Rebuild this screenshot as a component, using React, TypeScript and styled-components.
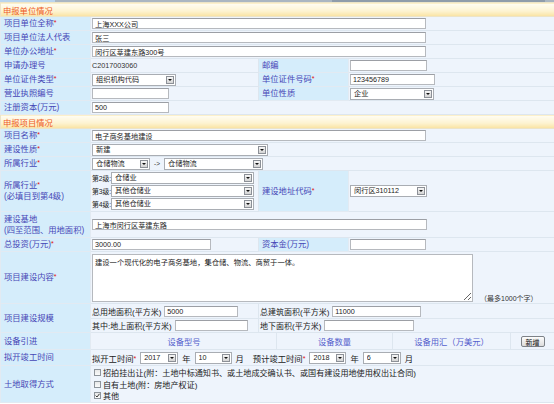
import React from 'react';
import styled, { createGlobalStyle } from 'styled-components';

const GlobalStyle = createGlobalStyle`
  html, body {
    margin: 0;
    padding: 0;
    background: #fff;
  }
  body {
    width: 554px;
    overflow: hidden;
    font-family: "Liberation Sans", "Noto Sans CJK SC", sans-serif;
  }
`;

const TopStrip = styled.div`
  height: 2px;
  background: linear-gradient(to right, #b9d4ee 0 55px, #aab6c2 55px 332px, #8f9cab 332px 545px, #aab6c2 545px);
`;

const FormTable = styled.table`
  width: 554px;
  table-layout: fixed;
  border-collapse: collapse;
`;

const SectionCell = styled.th`
  height: 13px;
  padding: 0 2px;
  text-align: left;
  font-weight: normal;
  font-size: 8.3px;
  color: #ee5a25;
  background: linear-gradient(#fffdf4, #fdf3d0 60%, #f9e2a0);
  border: 1px solid #ece4c8;
`;

const Label = styled.td<{ $h?: number }>`
  height: ${(p) => p.$h ?? 13}px;
  padding: 0 3px;
  background: #d5edfb;
  color: #4646b6;
  font-size: 8.3px;
  line-height: 1.3;
  border: 1px solid #e2eaf2;
  white-space: nowrap;
  overflow: hidden;
`;

const Value = styled.td<{ $h?: number }>`
  height: ${(p) => (p.$h ? `${p.$h}px` : 'auto')};
  padding: 0 0 0 1px;
  background: #eef4fc;
  font-size: 7.2px;
  color: #333;
  border: 1px solid #dde6ef;
  white-space: nowrap;
  overflow: hidden;
`;

const Req = styled.span`
  color: #e01010;
  font-size: 7px;
  vertical-align: 1px;
`;

const TextInput = styled.input<{ $w: number }>`
  box-sizing: border-box;
  display: block;
  width: ${(p) => p.$w}px;
  height: 11px;
  margin: 0;
  padding: 0 2px;
  border: 1px solid #b6b9be;
  border-top-color: #9c9fa5;
  background: #fff;
  font: 7.2px "Liberation Sans", "Noto Sans CJK SC", sans-serif;
  color: #222;
  outline: none;
`;

const SelectBox = styled.div<{ $w: number }>`
  box-sizing: border-box;
  display: inline-flex;
  align-items: center;
  width: ${(p) => p.$w}px;
  height: 12px;
  padding-left: 3px;
  border: 1px solid #a9adb3;
  background: #fff;
  font-size: 7.2px;
  color: #222;
  vertical-align: middle;
`;

const SelectText = styled.span`
  flex: 1;
  overflow: hidden;
  line-height: 10px;
`;

const SelectArrow = styled.span`
  box-sizing: border-box;
  width: 8px;
  height: 8px;
  margin-right: 1px;
  display: flex;
  align-items: center;
  justify-content: center;
  border: 1px solid #8c9097;
  background: linear-gradient(#f6f6f6, #d4d4d4);

  &::after {
    content: '';
    border-left: 2px solid transparent;
    border-right: 2px solid transparent;
    border-top: 2px solid #111;
  }
`;

function Select({ w, text }: { w: number; text: string }) {
  return (
    <SelectBox $w={w}>
      <SelectText>{text}</SelectText>
      <SelectArrow />
    </SelectBox>
  );
}

const Inline = styled.div<{ $gap?: number }>`
  display: flex;
  align-items: center;
  gap: ${(p) => p.$gap ?? 3}px;
  white-space: nowrap;
  font-size: 8px;
  color: #222;
`;

const LevelList = styled.div`
  display: flex;
  flex-direction: column;
  gap: 1px;
`;

const LevelTag = styled.span`
  width: 19px;
  font-size: 6.8px;
  color: #222;
`;

const Arrow = styled.span`
  width: 14px;
  text-align: center;
  font-size: 6.5px;
  color: #333;
`;

const Memo = styled.textarea`
  box-sizing: border-box;
  display: block;
  width: 381px;
  height: 48px;
  margin: 0;
  padding: 2px;
  border: 1px solid #b6b9be;
  background: #fff;
  font: 7.3px "Liberation Sans", "Noto Sans CJK SC", sans-serif;
  color: #222;
  outline: none;
`;

const MemoWrap = styled.div`
  display: flex;
  align-items: flex-end;
  gap: 7px;
`;

const Hint = styled.span`
  font-size: 7px;
  color: #333;
  margin-bottom: -1px;
`;

const EquipGrid = styled.div`
  display: grid;
  grid-template-columns: 185px 116px 118px 1fr;
  height: 16px;
`;

const EquipHead = styled.div`
  display: flex;
  align-items: center;
  justify-content: center;
  font-size: 8.3px;
  color: #5560cc;
  border-right: 1px solid #dde6ef;

  &:last-child {
    border-right: none;
  }
`;

const AddButton = styled.button`
  width: 24px;
  height: 11px;
  padding: 0;
  font: 7px "Liberation Sans", "Noto Sans CJK SC", sans-serif;
  color: #111;
  border: 1px solid #7d8288;
  border-radius: 2px;
  background: linear-gradient(#fdfdfd, #dcdcdc);
`;

const Plain = styled.span<{ $lead?: number }>`
  margin-left: ${(p) => p.$lead ?? 0}px;
  font-size: 8.3px;
  color: #222;
`;

const CheckList = styled.div`
  display: flex;
  flex-direction: column;
  gap: 1px;
  padding-left: 2px;
`;

const CheckRow = styled.label`
  display: flex;
  align-items: center;
  gap: 2px;
  height: 10.5px;
  font-size: 8.1px;
  color: #222;
`;

const CheckBox = styled.span`
  box-sizing: border-box;
  width: 7px;
  height: 7px;
  display: flex;
  align-items: center;
  justify-content: center;
  border: 1px solid #8e949b;
  background: linear-gradient(#e8e8e8, #fafafa);
`;

function Check({ on, children }: { on?: boolean; children: React.ReactNode }) {
  return (
    <CheckRow>
      <CheckBox>
        {on && (
          <svg width="5" height="5" viewBox="0 0 5 5">
            <path d="M0.6 2.6 L2 4 L4.5 0.8" fill="none" stroke="#222" strokeWidth="0.9" />
          </svg>
        )}
      </CheckBox>
      {children}
    </CheckRow>
  );
}

export default function App() {
  return (
    <>
      <GlobalStyle />
      <TopStrip />
      <FormTable>
        <colgroup>
          <col style={{ width: 90 }} />
          <col style={{ width: 168 }} />
          <col style={{ width: 90 }} />
          <col style={{ width: 206 }} />
        </colgroup>
        <tbody>
          <tr>
            <SectionCell colSpan={4}>申报单位情况</SectionCell>
          </tr>
          <tr>
            <Label>项目单位全称<Req>*</Req></Label>
            <Value colSpan={3}><TextInput $w={334} readOnly value="上海XXX公司" /></Value>
          </tr>
          <tr>
            <Label>项目单位法人代表</Label>
            <Value colSpan={3}><TextInput $w={334} readOnly value="张三" /></Value>
          </tr>
          <tr>
            <Label>单位办公地址<Req>*</Req></Label>
            <Value colSpan={3}><TextInput $w={334} readOnly value="闵行区莘建东路300号" /></Value>
          </tr>
          <tr>
            <Label>申请办理号</Label>
            <Value>C2017003060</Value>
            <Label>邮编</Label>
            <Value><TextInput $w={77} readOnly value="" /></Value>
          </tr>
          <tr>
            <Label>单位证件类型<Req>*</Req></Label>
            <Value><Select w={84} text="组织机构代码" /></Value>
            <Label>单位证件号码<Req>*</Req></Label>
            <Value><TextInput $w={85} readOnly value="123456789" /></Value>
          </tr>
          <tr>
            <Label>营业执照编号</Label>
            <Value><TextInput $w={77} readOnly value="" /></Value>
            <Label>单位性质</Label>
            <Value><Select w={84} text="企业" /></Value>
          </tr>
          <tr>
            <Label>注册资本(万元)</Label>
            <Value colSpan={3}><TextInput $w={77} readOnly value="500" /></Value>
          </tr>

          <tr>
            <SectionCell colSpan={4}>申报项目情况</SectionCell>
          </tr>
          <tr>
            <Label>项目名称<Req>*</Req></Label>
            <Value colSpan={3}><TextInput $w={334} readOnly value="电子商务基地建设" /></Value>
          </tr>
          <tr>
            <Label>建设性质<Req>*</Req></Label>
            <Value colSpan={3}><Select w={176} text="新建" /></Value>
          </tr>
          <tr>
            <Label>所属行业<Req>*</Req></Label>
            <Value colSpan={3}>
              <Inline $gap={0}>
                <Select w={58} text="仓储物流" />
                <Arrow>-&gt;</Arrow>
                <Select w={99} text="仓储物流" />
              </Inline>
            </Value>
          </tr>
          <tr>
            <Label $h={40}>
              所属行业<Req>*</Req>
              <br />
              (必填目到第4级)
            </Label>
            <Value>
              <LevelList>
                <Inline $gap={0}><LevelTag>第2级:</LevelTag><Select w={143} text="仓储业" /></Inline>
                <Inline $gap={0}><LevelTag>第3级:</LevelTag><Select w={143} text="其他仓储业" /></Inline>
                <Inline $gap={0}><LevelTag>第4级:</LevelTag><Select w={143} text="其他仓储业" /></Inline>
              </LevelList>
            </Value>
            <Label>建设地址代码<Req>*</Req></Label>
            <Value><Select w={77} text="闵行区310112" /></Value>
          </tr>
          <tr>
            <Label $h={25}>
              建设基地
              <br />
              (四至范围、用地面积)
            </Label>
            <Value colSpan={3}><TextInput $w={335} readOnly value="上海市闵行区莘建东路" /></Value>
          </tr>
          <tr>
            <Label>总投资(万元)<Req>*</Req></Label>
            <Value><TextInput $w={119} readOnly value="3000.00" /></Value>
            <Label>资本金(万元)</Label>
            <Value><TextInput $w={76} readOnly value="" /></Value>
          </tr>
          <tr>
            <Label $h={51}>项目建设内容<Req>*</Req></Label>
            <Value colSpan={3}>
              <MemoWrap>
                <Memo readOnly value="建设一个现代化的电子商务基地，集仓储、物流、商贸于一体。" />
                <Hint>（最多1000个字）</Hint>
              </MemoWrap>
            </Value>
          </tr>
          <tr>
            <Label rowSpan={2}>项目建设规模</Label>
            <Value $h={14}><Inline>总用地面积(平方米)<TextInput $w={74} readOnly value="5000" /></Inline></Value>
            <Value $h={14} colSpan={2}><Inline>总建筑面积(平方米)<TextInput $w={89} readOnly value="11000" /></Inline></Value>
          </tr>
          <tr>
            <Value $h={13}><Inline>其中:地上面积(平方米)<TextInput $w={73} readOnly value="" /></Inline></Value>
            <Value $h={13} colSpan={2}><Inline>地下面积(平方米)<TextInput $w={90} readOnly value="" /></Inline></Value>
          </tr>
          <tr>
            <Label $h={16}>设备引进</Label>
            <Value colSpan={3}>
              <EquipGrid>
                <EquipHead>设备型号</EquipHead>
                <EquipHead>设备数量</EquipHead>
                <EquipHead>设备用汇（万美元）</EquipHead>
                <EquipHead><AddButton type="button">新增</AddButton></EquipHead>
              </EquipGrid>
            </Value>
          </tr>
          <tr>
            <Label $h={15}>拟开竣工时间</Label>
            <Value colSpan={3}>
              <Inline $gap={4}>
                <Plain>拟开工时间<Req>*</Req></Plain>
                <Select w={38} text="2017" />
                <Plain>年</Plain>
                <Select w={37} text="10" />
                <Plain>月</Plain>
                <Plain $lead={5}>预计竣工时间<Req>*</Req></Plain>
                <Select w={37} text="2018" />
                <Plain>年</Plain>
                <Select w={38} text="6" />
                <Plain>月</Plain>
              </Inline>
            </Value>
          </tr>
          <tr>
            <Label $h={36}>土地取得方式</Label>
            <Value colSpan={3}>
              <CheckList>
                <Check>招拍挂出让(附：土地中标通知书、或土地成交确认书、或国有建设用地使用权出让合同)</Check>
                <Check>自有土地(附：房地产权证)</Check>
                <Check on>其他</Check>
              </CheckList>
            </Value>
          </tr>
        </tbody>
      </FormTable>
    </>
  );
}
